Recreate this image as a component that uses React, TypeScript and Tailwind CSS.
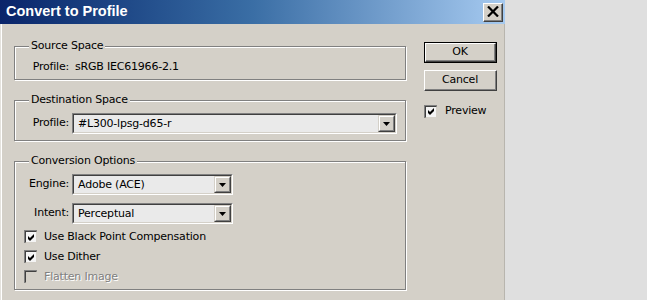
import React from "react";

const font = { fontFamily: '"DejaVu Sans", Tahoma, sans-serif' };

function Check({ checked, disabled }: { checked?: boolean; disabled?: boolean }) {
  return (
    <div className="w-[13px] h-[13px] shrink-0 border-t border-l border-[#808080] border-b-white border-r-white">
      <div
        className={
          "w-full h-full border-t border-l border-t-[#404040] border-l-[#404040] border-b border-r border-b-[#d4d0c8] border-r-[#d4d0c8] flex items-center justify-center " +
          (disabled ? "bg-[#d4d0c8]" : "bg-[#f4f4f4]")
        }
      >
        {checked && (
          <svg width="7" height="7" viewBox="0 0 7 7">
            <path d="M0 2 L2 4 L6 0 L6 3 L2 7 L0 5 Z" fill="#000" />
          </svg>
        )}
      </div>
    </div>
  );
}

function Combo({ value, width }: { value: string; width: string }) {
  return (
    <div className={"h-[21px] border-t border-l border-t-[#808080] border-l-[#808080] border-b border-r border-b-white border-r-white " + width}>
      <div className="h-full flex border-t border-l border-t-[#404040] border-l-[#404040] border-b border-r border-b-[#d4d0c8] border-r-[#d4d0c8] bg-[#eaeaea]">
        <div className="flex-1 pl-[4px] leading-[17px] text-black">{value}</div>
        <div className="w-[17px] h-full border-t border-l border-t-[#d4d0c8] border-l-[#d4d0c8] border-b border-r border-b-[#404040] border-r-[#404040]">
          <div className="w-full h-full bg-[#d4d0c8] border-t border-l border-t-white border-l-white border-b border-r border-b-[#808080] border-r-[#808080] flex items-center justify-center">
            <svg width="7" height="4" viewBox="0 0 7 4">
              <path d="M0 0 H7 L3.5 4 Z" fill="#000" />
            </svg>
          </div>
        </div>
      </div>
    </div>
  );
}

function Group({ title, children, className }: { title: string; children: React.ReactNode; className?: string }) {
  return (
    <div className={"border border-[#808080] shadow-[1px_1px_0_#fff,inset_1px_1px_0_#fff] flex flex-col " + (className || "")}>
      <span className="-mt-[8px] ml-[14px] px-[2px] self-start bg-[#d4d0c8] leading-[14px] text-black">{title}</span>
      {children}
    </div>
  );
}

function Btn({ label, def }: { label: string; def?: boolean }) {
  return (
    <div className={"w-[73px] h-[21px] " + (def ? "border border-black" : "")}>
      <div className="w-full h-full border-t border-l border-t-white border-l-white border-b border-r border-b-[#404040] border-r-[#404040]">
        <div className="w-full h-full border-b border-r border-b-[#808080] border-r-[#808080] flex items-center justify-center text-black">
          {label}
        </div>
      </div>
    </div>
  );
}

export default function App() {
  return (
    <div className="w-[647px] h-[300px] flex bg-[#dfdfdf] overflow-hidden text-[11px] tracking-[-0.2px]" style={font}>
      <div className="w-[505px] h-[300px] bg-[#d4d0c8] flex flex-col shadow-[inset_1px_0_0_#e4e2dd,inset_2px_0_0_#fff,inset_-1px_0_0_#b8b5ae]">
        <div className="h-[24px] bg-gradient-to-r from-[#0a246a] via-[#3a6ea5] to-[#a6caf0] flex items-center pl-[6px] pr-[2px]">
          <span
            className="text-white font-bold text-[14.5px] tracking-normal flex-1"
            style={{ fontFamily: '"Liberation Sans", Arial, sans-serif' }}
          >
            Convert to Profile
          </span>
          <div className="w-[20px] h-[19px] border-t border-l border-t-white border-l-white border-b border-r border-b-[#404040] border-r-[#404040] bg-[#d4d0c8]">
            <div className="w-full h-full border-b border-r border-b-[#808080] border-r-[#808080] flex items-center justify-center">
              <svg width="12" height="11" viewBox="0 0 12 11">
                <path d="M1 0.5 L11 10.5 M11 0.5 L1 10.5" stroke="#000" strokeWidth="2.2" />
              </svg>
            </div>
          </div>
        </div>

        <div className="flex items-start pt-[18px] pl-[14px]">
          <div className="w-[392px] mt-[4px] flex flex-col">
            <Group title="Source Space">
              <div className="mt-[7px] mb-[5px] flex h-[14px] leading-[14px] text-black">
                <span className="w-[54px] text-right">Profile:</span>
                <span className="ml-[6px]">sRGB IEC61966-2.1</span>
              </div>
            </Group>

            <Group title="Destination Space" className="mt-[20px]">
              <div className="mt-[6px] mb-[6px] flex items-center text-black">
                <span className="w-[54px] text-right">Profile:</span>
                <div className="ml-[3px]">
                  <Combo value="#L300-lpsg-d65-r" width="w-[325px]" />
                </div>
              </div>
            </Group>

            <Group title="Conversion Options" className="mt-[20px]">
              <div className="mt-[6px] flex items-center text-black">
                <span className="w-[54px] text-right">Engine:</span>
                <div className="ml-[3px]">
                  <Combo value="Adobe (ACE)" width="w-[161px]" />
                </div>
              </div>
              <div className="mt-[8px] flex items-center text-black">
                <span className="w-[54px] text-right">Intent:</span>
                <div className="ml-[3px]">
                  <Combo value="Perceptual" width="w-[161px]" />
                </div>
              </div>
              <div className="mt-[6px] mb-[6px] ml-[9px] flex flex-col gap-[7px]">
                <div className="h-[13px] flex items-center gap-[7px] text-black">
                  <Check checked />
                  <span className="leading-[13px]">Use Black Point Compensation</span>
                </div>
                <div className="h-[13px] flex items-center gap-[7px] text-black">
                  <Check checked />
                  <span className="leading-[13px]">Use Dither</span>
                </div>
                <div className="h-[13px] flex items-center gap-[7px]">
                  <Check disabled />
                  <span className="leading-[13px] text-[#808080] [text-shadow:1px_1px_0_#fff]">Flatten Image</span>
                </div>
              </div>
            </Group>
          </div>

          <div className="ml-[18px] flex flex-col">
            <Btn label="OK" def />
            <div className="mt-[7px]">
              <Btn label="Cancel" />
            </div>
            <div className="mt-[13px] flex items-center gap-[8px] text-black">
              <Check checked />
              <span className="leading-[14px]">Preview</span>
            </div>
          </div>
        </div>
      </div>
      <div className="flex-1" />
    </div>
  );
}
